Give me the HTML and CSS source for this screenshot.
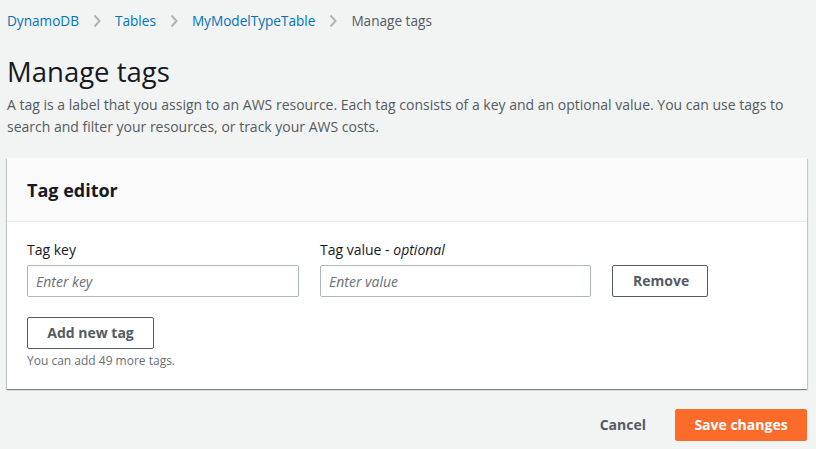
FILE: index.html
```html
<!DOCTYPE html>
<html lang="en">
<head>
<meta charset="utf-8">
<title>Manage tags</title>
<link rel="stylesheet" href="styles.css">
</head>
<body>
<div class="page">
  <nav class="breadcrumbs">
    <a class="crumb" href="#">DynamoDB</a>
    <svg class="chev" width="8" height="14" viewBox="0 0 8 14"><polyline points="1.5,1.5 6.5,7 1.5,12.5" fill="none" stroke="#aab7b8" stroke-width="2"/></svg>
    <a class="crumb" href="#">Tables</a>
    <svg class="chev" width="8" height="14" viewBox="0 0 8 14"><polyline points="1.5,1.5 6.5,7 1.5,12.5" fill="none" stroke="#aab7b8" stroke-width="2"/></svg>
    <a class="crumb" href="#">MyModelTypeTable</a>
    <svg class="chev" width="8" height="14" viewBox="0 0 8 14"><polyline points="1.5,1.5 6.5,7 1.5,12.5" fill="none" stroke="#aab7b8" stroke-width="2"/></svg>
    <span class="crumb current">Manage tags</span>
  </nav>

  <h1 class="title">Manage tags</h1>
  <p class="desc">A tag is a label that you assign to an AWS resource. Each tag consists of a key and an optional value. You can use tags to search and filter your resources, or track your AWS costs.</p>

  <section class="card">
    <div class="card-header">
      <h2 class="card-title">Tag editor</h2>
    </div>
    <div class="card-body">
      <div class="tag-row">
        <div class="field key-field">
          <label class="label">Tag key</label>
          <input class="input" type="text" placeholder="Enter key">
        </div>
        <div class="field value-field">
          <label class="label">Tag value - <i>optional</i></label>
          <input class="input" type="text" placeholder="Enter value">
        </div>
        <div class="field remove-field">
          <button class="btn btn-normal remove-btn">Remove</button>
        </div>
      </div>
      <button class="btn btn-normal add-btn">Add new tag</button>
      <p class="hint">You can add 49 more tags.</p>
    </div>
  </section>

  <div class="actions">
    <button class="btn btn-link">Cancel</button>
    <button class="btn btn-primary">Save changes</button>
  </div>
</div>
</body>
</html>
```

FILE: styles.css
```css
html, body {
  margin: 0;
  padding: 0;
  background: #f2f3f3;
}
body {
  font-family: "Open Sans", "Noto Sans", Arial, sans-serif;
  font-size: 14px;
  color: #16191f;
}
.page {
  padding: 0 9px 0 7px;
}
.breadcrumbs {
  display: flex;
  align-items: center;
  height: 42px;
  gap: 13px;
}
.crumb {
  font-size: 13.6px;
  line-height: 20px;
  color: #0073bb;
  text-decoration: none;
}
.crumb.current {
  color: #545b64;
}
.chev {
  display: block;
  margin: 0 1px;
}
.title {
  margin: 10px 0 0;
  font-size: 27.5px;
  font-weight: 400;
  line-height: 40px;
  color: #16191f;
}
.desc {
  margin: 2px 0 0;
  font-size: 14px;
  line-height: 22px;
  color: #545b64;
}
.card {
  margin-top: 20px;
  background: #fff;
  box-shadow: 0 1px 1px 0 rgba(0, 28, 36, 0.3), 1px 1px 1px 0 rgba(0, 28, 36, 0.15), -1px 1px 1px 0 rgba(0, 28, 36, 0.15);
}
.card-header {
  background: #fafafa;
  border-bottom: 1px solid #eaeded;
  height: 63px;
  display: flex;
  align-items: center;
  padding: 0 20px;
}
.card-title {
  margin: 0;
  font-size: 18px;
  font-weight: 700;
  line-height: 24px;
  color: #16191f;
}
.card-body {
  padding: 17px 20px 20px;
}
.tag-row {
  display: flex;
  align-items: flex-end;
  gap: 21px;
}
.field {
  display: flex;
  flex-direction: column;
}
.key-field { width: 272px; }
.value-field { width: 271px; }
.label {
  font-size: 14px;
  line-height: 22px;
  margin-bottom: 4px;
  color: #16191f;
}
.label i {
  font-style: italic;
}
.input {
  box-sizing: border-box;
  height: 32px;
  width: 100%;
  border: 1px solid #aab7b8;
  border-radius: 2px;
  padding: 4px 8px;
  font-family: inherit;
  font-size: 14px;
  color: #16191f;
  background: #fff;
  outline: none;
}
.input::placeholder {
  color: #687078;
  font-style: italic;
}
.btn {
  font-family: inherit;
  font-size: 14px;
  font-weight: 700;
  line-height: 22px;
  cursor: pointer;
  border-radius: 2px;
  box-sizing: border-box;
}
.btn-normal {
  background: #fff;
  border: 1px solid #545b64;
  color: #545b64;
  padding: 4px 20px;
}
.remove-btn {
  height: 32px;
  width: 96px;
}
.add-btn {
  display: block;
  margin-top: 20px;
  height: 32px;
  width: 127px;
  padding: 4px 0;
}
.hint {
  margin: 4px 0 0;
  font-size: 12px;
  line-height: 16px;
  color: #687078;
}
.actions {
  display: flex;
  justify-content: flex-end;
  align-items: center;
  margin-top: 20px;
  gap: 9px;
}
.btn-link {
  background: none;
  border: none;
  color: #545b64;
  padding: 5px 20px;
  height: 32px;
}
.btn-primary {
  background: #fd6b2b;
  border: 1px solid #fd6b2b;
  color: #fff;
  height: 32px;
  width: 132px;
  padding: 4px 0;
}
```
